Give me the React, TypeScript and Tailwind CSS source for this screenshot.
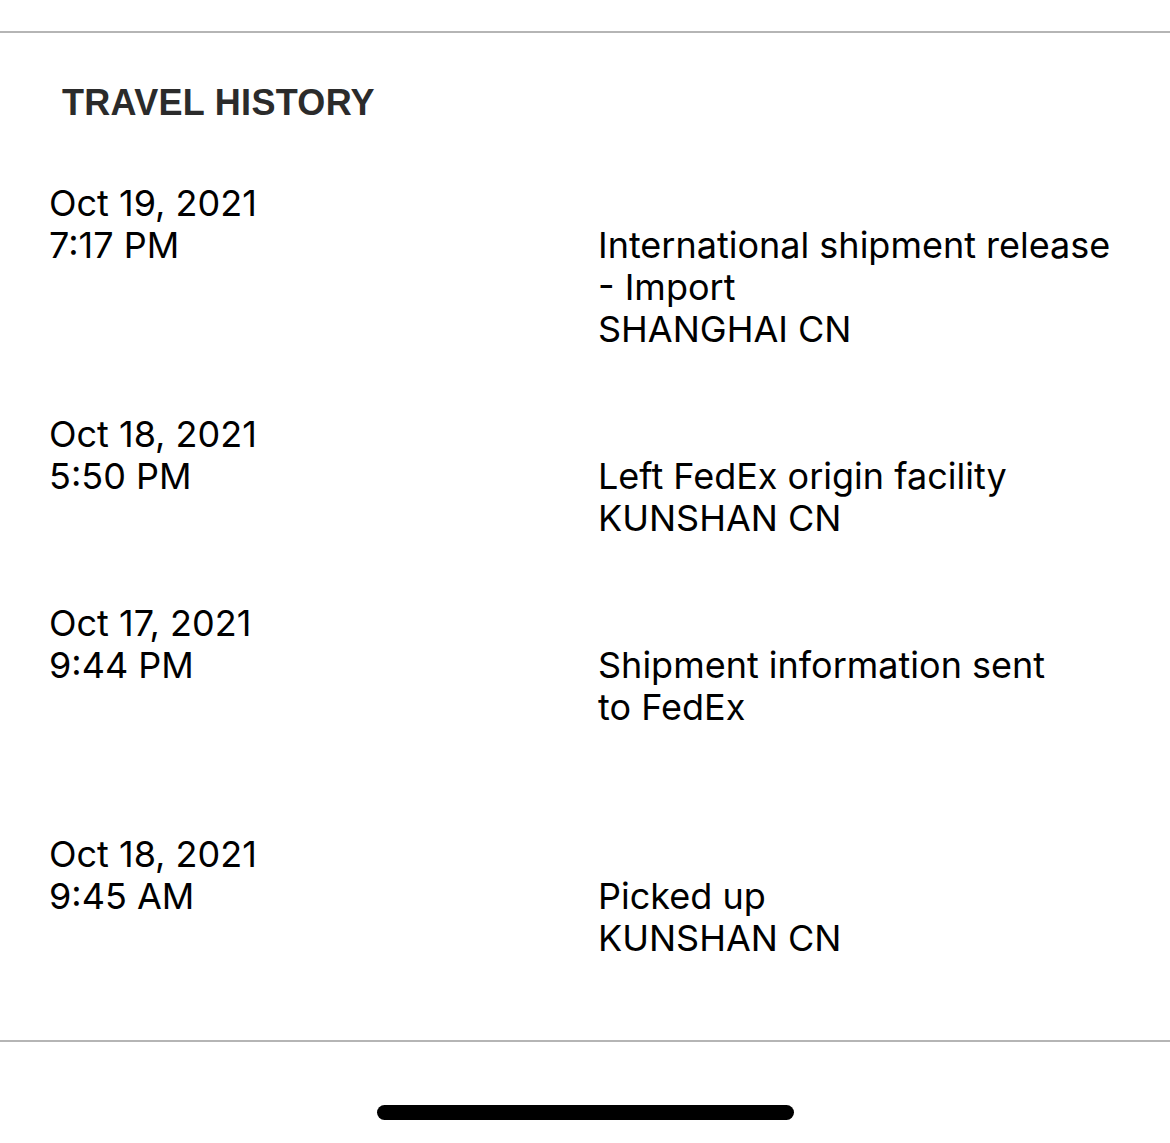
import React from "react";

interface TravelEvent {
  date: string;
  time: string;
  lines: string[];
  extraGap?: boolean;
}

const events: TravelEvent[] = [
  {
    date: "Oct 19, 2021",
    time: "7:17 PM",
    lines: ["International shipment release", "- Import", "SHANGHAI CN"],
  },
  {
    date: "Oct 18, 2021",
    time: "5:50 PM",
    lines: ["Left FedEx origin facility", "KUNSHAN CN"],
  },
  {
    date: "Oct 17, 2021",
    time: "9:44 PM",
    lines: ["Shipment information sent", "to FedEx"],
    extraGap: true,
  },
  {
    date: "Oct 18, 2021",
    time: "9:45 AM",
    lines: ["Picked up", "KUNSHAN CN"],
  },
];

export default function App() {
  return (
    <div
      className="w-[1170px] h-[1143px] bg-white flex flex-col overflow-hidden text-black"
      style={{ fontFamily: 'Inter, "Liberation Sans", Arial, sans-serif' }}
    >
      <div className="h-[31px]" />
      <div className="h-[1.5px] bg-[#b5b5b5]" />

      {/* Header */}
      <h2
        className="mt-[48px] pl-[62px] text-[36px] leading-[44px] font-bold text-[#2b2b2b] tracking-[0.3px]"
        style={{ fontFamily: '"Liberation Sans", Arial, sans-serif' }}
      >
        TRAVEL HISTORY
      </h2>

      {/* History rows */}
      <div className="mt-[57px] flex flex-col">
        {events.map((ev, idx) => (
          <div
            key={idx}
            className={`grid grid-cols-[598px_1fr] text-[36px] leading-[42px] ${
              idx > 0 ? (events[idx - 1].extraGap ? "mt-[105px]" : "mt-[63px]") : ""
            }`}
          >
            <div className="pl-[49px]">
              <div>{ev.date}</div>
              <div>{ev.time}</div>
            </div>
            <div className="pt-[42px]">
              {ev.lines.map((l, i) => (
                <div key={i} className="whitespace-nowrap">
                  {l}
                </div>
              ))}
            </div>
          </div>
        ))}
      </div>

      <div className="mt-[81px] h-[2px] bg-[#b5b5b5]" />

      {/* Home indicator */}
      <div className="flex justify-center mt-[63px]">
        <div className="w-[417px] h-[15px] rounded-full bg-black" />
      </div>
    </div>
  );
}
